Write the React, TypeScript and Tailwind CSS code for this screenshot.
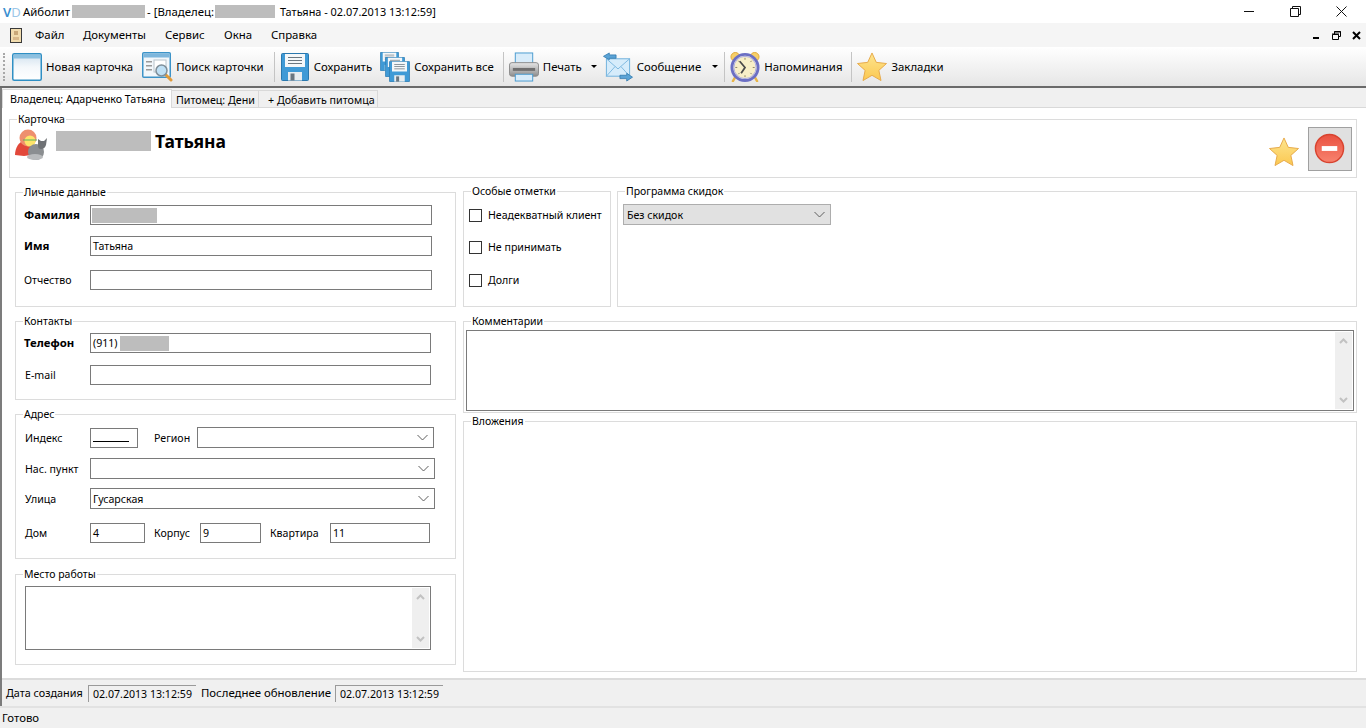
import type { ReactNode } from 'react';

const Redact = ({ className }: { className: string }) => <span className={`inline-block bg-[#bdbdbd] ${className}`} />;

const CardIcon = () => (
  <svg width="30" height="28" viewBox="0 0 30 28">
    <defs>
      <linearGradient id="cardBody" x1="0" y1="0" x2="0" y2="1">
        <stop offset="0" stopColor="#cfe0ee" />
        <stop offset="0.5" stopColor="#f4f8fb" />
        <stop offset="1" stopColor="#ffffff" />
      </linearGradient>
    </defs>
    <rect x="0.75" y="0.75" width="28.5" height="26.5" rx="1.5" fill="url(#cardBody)" stroke="#2f8fc4" strokeWidth="1.5" />
    <rect x="1.5" y="1.5" width="27" height="4" fill="#8cc0e0" />
  </svg>
);

const SearchIcon = () => (
  <svg width="31" height="30" viewBox="0 0 31 30" className="-mr-px">
    <rect x="0.75" y="0.75" width="27.5" height="24.5" rx="1" fill="#f2f7fb" stroke="#3c93c8" strokeWidth="1.5" />
    <rect x="1.5" y="1.5" width="26" height="4" fill="#7db6dc" />
    <rect x="4" y="9" width="6" height="1.5" fill="#9a9a9a" />
    <rect x="4" y="13" width="6" height="1.5" fill="#9a9a9a" />
    <rect x="4" y="17" width="6" height="1.5" fill="#9a9a9a" />
    <rect x="12" y="8" width="12" height="12" fill="#ffffff" stroke="#b8c4cc" />
    <path d="M24 23l5 5" stroke="#e09a3a" strokeWidth="3" strokeLinecap="round" />
    <circle cx="19.5" cy="18.5" r="5.5" fill="#bfe0f5" stroke="#7f8f9a" strokeWidth="1.5" />
  </svg>
);

const Floppy = ({ size = 28 }: { size?: number }) => (
  <svg width={size} height={size} viewBox="0 0 28 28">
    <path d="M1.5 0.5h25a1 1 0 011 1v25a1 1 0 01-1 1h-25a1 1 0 01-1-1v-25a1 1 0 011-1z" fill="#3f9ad6" stroke="#2a78ae" />
    <rect x="4" y="1" width="20" height="13" fill="#f4f7f9" />
    <rect x="7" y="4" width="14" height="1" fill="#6b7780" />
    <rect x="7" y="7" width="14" height="1" fill="#6b7780" />
    <rect x="7" y="10" width="14" height="1" fill="#6b7780" />
    <rect x="7" y="19" width="14" height="8.5" fill="#e8edf0" />
    <rect x="9.5" y="20.5" width="4" height="7" fill="#6a7680" />
  </svg>
);

const SaveAllIcon = () => (
  <div className="relative h-[30px] w-[30px]">
    <div className="absolute left-0 top-0"><Floppy size={19} /></div>
    <div className="absolute left-[5px] top-[5px]"><Floppy size={20} /></div>
    <div className="absolute left-[9px] top-[9px]"><Floppy size={21} /></div>
  </div>
);

const PrinterIcon = () => (
  <svg width="30" height="30" viewBox="0 0 31 30">
    <defs>
      <linearGradient id="printerBody" x1="0" y1="0" x2="0" y2="1">
        <stop offset="0" stopColor="#e6e6e6" />
        <stop offset="1" stopColor="#8d8d8d" />
      </linearGradient>
    </defs>
    <rect x="6.5" y="0.5" width="18" height="13" fill="#d8ecfa" stroke="#4a9bd0" />
    <rect x="0.5" y="10.5" width="30" height="14" rx="2.5" fill="url(#printerBody)" stroke="#8a8a8a" />
    <rect x="4" y="16" width="23" height="3" fill="#6f6f6f" />
    <rect x="6.5" y="22.5" width="18" height="7" fill="#d8ecfa" stroke="#4a9bd0" />
  </svg>
);

const MessageIcon = () => (
  <svg width="30" height="30" viewBox="0 0 31 30">
    <rect x="3.5" y="6.5" width="24" height="18" fill="#d6ecfb" stroke="#6fb1dd" />
    <path d="M3.5 6.5L15.5 17l12-10.5M3.5 24.5l9-10M27.5 24.5l-9-10" fill="none" stroke="#7db8e0" />
    <path d="M0.5 4L6.5 0.5V2.5H13.5V6H6.5V7.5z" fill="#5aa3d6" stroke="#2f78ae" strokeWidth="0.8" />
    <path d="M30.5 25.5L24.5 29.5V27H17.5V23.5H24.5V21.5z" fill="#5aa3d6" stroke="#2f78ae" strokeWidth="0.8" />
  </svg>
);

const ClockIcon = () => (
  <svg width="30" height="30" viewBox="0 0 31 31">
    <circle cx="5.5" cy="5" r="4.5" fill="#f7cf68" stroke="#e0a838" />
    <circle cx="25.5" cy="5" r="4.5" fill="#f7cf68" stroke="#e0a838" />
    <path d="M6 25l-3 5M25 25l3 5" stroke="#e8b548" strokeWidth="2.5" strokeLinecap="round" />
    <circle cx="15.5" cy="16" r="13.5" fill="#f8efc8" stroke="#6b6fc4" strokeWidth="3" />
    <circle cx="15.5" cy="16" r="11.5" fill="none" stroke="#a9abe6" />
    <path d="M15.5 6v2M15.5 24v2M5.5 16h2M23.5 16h2M8.5 9l1.4 1.4M22.5 23l-1.4-1.4M22.5 9l-1.4 1.4M8.5 23l1.4-1.4" stroke="#8a8468" strokeWidth="1" />
    <path d="M10 9.5L15.5 16L11.5 22" fill="none" stroke="#4a4a4a" strokeWidth="1.8" />
  </svg>
);

const Star = ({ size = 30 }: { size?: number }) => (
  <svg width={size} height={size} viewBox="0 0 31 31">
    <defs>
      <linearGradient id="starFill" x1="0" y1="0" x2="0" y2="1">
        <stop offset="0" stopColor="#fde58f" />
        <stop offset="1" stopColor="#fbc851" />
      </linearGradient>
    </defs>
    <path
      d="M15.5 1l4.4 9.7 10.6 1.2-7.9 7.1 2.2 10.5-9.3-5.4-9.3 5.4 2.2-10.5L0.5 11.9l10.6-1.2z"
      fill="url(#starFill)"
      stroke="#e6a94a"
      strokeWidth="1"
      strokeLinejoin="round"
    />
  </svg>
);

const OwnerIcon = () => (
  <svg width="33" height="33" viewBox="0 0 33 33">
    <path d="M0 27c0-7 4-13 8-14h8c2 2 2 10 0 14l-7 1z" fill="#e2483a" />
    <circle cx="13" cy="10" r="8.5" fill="#ee8f6e" />
    <circle cx="15" cy="13" r="5.5" fill="#fde46a" />
    <path d="M8 12h14" stroke="#5eb35a" strokeWidth="1" />
    <ellipse cx="21" cy="24" rx="8" ry="8" fill="#8b8e91" />
    <ellipse cx="20" cy="29" rx="8" ry="3" fill="#b9bbbd" />
    <path d="M23 17v-6l3 2h3l3-3-1 7c-1 3-3 4-5 4-2 0-3-1-3-4z" fill="#6f7275" />
  </svg>
);

const StopIcon = () => (
  <svg width="31" height="31" viewBox="0 0 32 32">
    <defs>
      <linearGradient id="stopFill" x1="0" y1="0" x2="0" y2="1">
        <stop offset="0" stopColor="#e9503f" />
        <stop offset="1" stopColor="#f8836f" />
      </linearGradient>
    </defs>
    <circle cx="16" cy="16" r="14.5" fill="url(#stopFill)" stroke="#d8432f" strokeWidth="1.5" />
    <rect x="8" y="13.5" width="16" height="5" fill="#ffffff" />
  </svg>
);

const ChevronDown = () => (
  <svg width="11" height="7" viewBox="0 0 11 7" className="shrink-0">
    <path d="M0.5 1l5 5 5-5" fill="none" stroke="#5f5f5f" />
  </svg>
);

const Separator = ({ className }: { className: string }) => <div className={`h-[30px] w-px bg-[#c4c4c4] ${className}`} />;

const ToolItem = ({ icon, label, className }: { icon: ReactNode; label: string; className: string }) => (
  <div className={`flex shrink-0 items-center ${className}`}>
    {icon}
    <span className="ml-[4px] whitespace-nowrap">{label}</span>
  </div>
);

const Caret = ({ className }: { className: string }) => (
  <div className={`h-0 w-0 shrink-0 border-x-[3px] border-t-[3px] border-x-transparent border-t-black ${className}`} />
);

const Group = ({ title, className, children }: { title: string; className: string; children?: ReactNode }) => (
  <fieldset className={`min-w-0 border border-[#dcdcdc] text-[10.6px] ${className}`}>
    <legend className="ml-[7px] px-px text-[10.5px] leading-[13px] whitespace-nowrap">{title}</legend>
    {children}
  </fieldset>
);

const TextBox = ({ className, children }: { className: string; children?: ReactNode }) => (
  <div className={`flex h-[20px] shrink-0 items-center border border-[#7a7a7a] bg-white px-[2px] ${className}`}>{children}</div>
);

const ComboBox = ({ className, value }: { className: string; value?: string }) => (
  <div className={`flex h-[21px] shrink-0 items-center justify-between border border-[#7a7a7a] bg-white pl-[2px] pr-[5px] ${className}`}>
    <span>{value}</span>
    <ChevronDown />
  </div>
);

const Check = ({ label, className }: { label: string; className: string }) => (
  <div className={`flex items-center ${className}`}>
    <div className="h-[13px] w-[13px] shrink-0 border border-[#333333] bg-white" />
    <span className="ml-[6px] whitespace-nowrap">{label}</span>
  </div>
);

const ScrollBar = () => (
  <div className="flex w-[17px] shrink-0 flex-col items-center justify-between bg-[#efefef] py-[6px]">
    <svg width="9" height="6" viewBox="0 0 9 6"><path d="M1 5l3.5-3.5L8 5" fill="none" stroke="#c2c2c2" strokeWidth="2" /></svg>
    <svg width="9" height="6" viewBox="0 0 9 6"><path d="M1 1l3.5 3.5L8 1" fill="none" stroke="#c2c2c2" strokeWidth="2" /></svg>
  </div>
);

const MENU = [
  { label: 'Файл', cls: 'ml-[13px] w-[48px]' },
  { label: 'Документы', cls: 'w-[82px]' },
  { label: 'Сервис', cls: 'w-[59px]' },
  { label: 'Окна', cls: 'w-[47px]' },
  { label: 'Справка', cls: 'w-[60px]' },
];

export default function App() {
  return (
    <div className="flex h-[728px] w-[1366px] flex-col overflow-hidden bg-white text-[11.4px] leading-[14px] text-black [font-family:'Noto_Sans','Liberation_Sans',sans-serif]">
      {/* title bar */}
      <div className="flex h-[23px] shrink-0 items-center">
        <span className="ml-[3px] w-[17px] text-[13px] font-semibold"><span className="text-[#3b8fd0]">V</span><span className="font-normal text-[#9cc7e8]">D</span></span>
        <span className="ml-[3px] w-[49px]">Айболит</span>
        <Redact className="h-[13px] w-[73px]" />
        <span className="ml-[2px] w-[68px] whitespace-pre">- [Владелец:</span>
        <Redact className="h-[13px] w-[60px]" />
        <span className="ml-[5px] text-[10.9px] whitespace-pre">Татьяна - 02.07.2013 13:12:59]</span>
        <div className="ml-auto flex items-center">
          <svg width="11" height="11" viewBox="0 0 11 11" className="mr-[35px]"><path d="M0 5.5h10" stroke="#111" /></svg>
          <svg width="11" height="11" viewBox="0 0 11 11" className="mr-[35px]"><path d="M0.5 2.5h8v8h-8zM2.5 2.5v-2h8v8h-2" fill="none" stroke="#111" /></svg>
          <svg width="11" height="11" viewBox="0 0 11 11" className="mr-[19px]"><path d="M0.5 0.5l10 10M10.5 0.5l-10 10" stroke="#111" /></svg>
        </div>
      </div>

      {/* menu */}
      <div className="flex h-[24px] shrink-0 items-center bg-[#f5f5f5]">
        <svg width="12" height="15" viewBox="0 0 12 15" className="ml-[10px]">
          <rect x="0.5" y="0.5" width="11" height="14" fill="#f1dcae" stroke="#3a3a3a" />
          <rect x="4" y="3" width="4" height="4" fill="#c9a878" />
          <rect x="3" y="9" width="6" height="3" fill="#d9b98a" />
        </svg>
        {MENU.map((m) => (
          <span key={m.label} className={`whitespace-nowrap ${m.cls}`}>{m.label}</span>
        ))}
        <div className="ml-auto flex items-center">
          <div className="mr-[13px] mt-[5px] h-[2px] w-[6px] bg-black" />
          <svg width="9" height="9" viewBox="0 0 9 9" className="mr-[11px]"><path d="M0.5 3.5h6v5h-6zM2.5 3V0.5h6v5H7" fill="none" stroke="#000" strokeWidth="1" /><path d="M0 3h7M2 1h7" stroke="#000" /></svg>
          <svg width="9" height="9" viewBox="0 0 9 9" className="mr-[5px]"><path d="M1 1l7 7M8 1l-7 7" stroke="#000" strokeWidth="2" /></svg>
        </div>
      </div>

      {/* toolbar */}
      <div className="flex h-[41px] shrink-0 items-center border-b-2 border-[#6a6a6a] bg-gradient-to-b from-white to-[#e6e6e6]">
        <div className="ml-[3px] h-[28px] w-[2px] border-l-2 border-dotted border-[#a8a8a8]" />
        <ToolItem className="ml-[7px]" icon={<CardIcon />} label="Новая карточка" />
        <ToolItem className="ml-[9px]" icon={<SearchIcon />} label="Поиск карточки" />
        <Separator className="ml-[10px]" />
        <ToolItem className="ml-[6px]" icon={<div className="w-[29px]"><Floppy /></div>} label="Сохранить" />
        <ToolItem className="ml-[8px]" icon={<SaveAllIcon />} label="Сохранить все" />
        <Separator className="ml-[9px]" />
        <ToolItem className="ml-[5px]" icon={<PrinterIcon />} label="Печать" />
        <Caret className="ml-[9px]" />
        <ToolItem className="ml-[6px]" icon={<MessageIcon />} label="Сообщение" />
        <Caret className="ml-[11px]" />
        <Separator className="ml-[6px]" />
        <ToolItem className="ml-[5px]" icon={<ClockIcon />} label="Напоминания" />
        <Separator className="ml-[9px]" />
        <ToolItem className="ml-[5px]" icon={<Star />} label="Закладки" />
      </div>

      {/* body */}
      <div className="flex min-h-0 flex-1 flex-col border-l-2 border-[#7c7c7c]">
        {/* tabs */}
        <div className="flex h-[20px] shrink-0 items-end border-b border-[#d9d9d9] bg-[#f0f0f0] text-[10.7px] whitespace-nowrap">
          <div className="-mb-px flex h-[19px] w-[170px] items-center border-x border-t border-[#d9d9d9] bg-white pl-[7px]">Владелец: Адарченко Татьяна</div>
          <div className="flex h-[17px] w-[87px] items-center border-r border-t border-[#d9d9d9] pl-[4px] pt-px">Питомец: Дени</div>
          <div className="flex h-[17px] w-[119px] items-center border-r border-t border-[#d9d9d9] pl-[9px] pt-px">+ Добавить питомца</div>
        </div>

        <div className="min-h-0 flex-1 pl-[7px] pt-[5px]">
          <Group title="Карточка" className="h-[65px] w-[1348px]">
            <div className="flex items-start">
              <div className="ml-[5px] mt-[2px]"><OwnerIcon /></div>
              <Redact className="ml-[8px] mt-[5px] h-[20px] w-[95px]" />
              <span className="ml-[4px] mt-[5px] text-[17.5px] leading-[20px] font-bold">Татьяна</span>
              <div className="ml-auto mr-[4px] flex items-center">
                <div className="mr-[9px] mt-[7px]"><Star /></div>
                <div className="mt-px flex h-[44px] w-[44px] items-center justify-center border border-[#a0a0a0] bg-[#e0e0e0] pb-px pr-px"><StopIcon /></div>
              </div>
            </div>
          </Group>

          <div className="mt-[8px] flex">
            {/* left column */}
            <div className="ml-[6px] flex w-[441px] shrink-0 flex-col">
              <Group title="Личные данные" className="h-[121px]">
                <div className="flex items-center pl-[8px] pt-[6px]">
                  <span className="w-[66px] text-[11.4px] font-bold">Фамилия</span>
                  <TextBox className="w-[342px]"><Redact className="-ml-px h-[15px] w-[65px]" /></TextBox>
                </div>
                <div className="mt-[11px] flex items-center pl-[8px]">
                  <span className="w-[66px] text-[11.4px] font-bold">Имя</span>
                  <TextBox className="w-[342px]">Татьяна</TextBox>
                </div>
                <div className="mt-[14px] flex items-center pl-[8px]">
                  <span className="w-[66px]">Отчество</span>
                  <TextBox className="w-[342px]" />
                </div>
              </Group>

              <Group title="Контакты" className="mt-[8px] h-[85px]">
                <div className="flex items-center pl-[8px] pt-[5px]">
                  <span className="w-[66px] text-[11.4px] font-bold">Телефон</span>
                  <TextBox className="w-[341px]">(911)<Redact className="ml-[2px] h-[15px] w-[49px]" /></TextBox>
                </div>
                <div className="mt-[12px] flex items-center pl-[9px]">
                  <span className="w-[65px]">E-mail</span>
                  <TextBox className="w-[341px]" />
                </div>
              </Group>

              <Group title="Адрес" className="mt-[8px] h-[151px]">
                <div className="flex items-center pl-[9px] pt-[6px]">
                  <span className="w-[65px]">Индекс</span>
                  <TextBox className="w-[48px]"><span className="mt-[8px] h-px w-[36px] bg-black" /></TextBox>
                  <span className="ml-[16px] w-[43px]">Регион</span>
                  <ComboBox className="w-[237px]" />
                </div>
                <div className="mt-[10px] flex items-center pl-[9px]">
                  <span className="w-[65px]">Нас. пункт</span>
                  <ComboBox className="w-[345px]" />
                </div>
                <div className="mt-[9px] flex items-center pl-[9px]">
                  <span className="w-[65px]">Улица</span>
                  <ComboBox className="w-[345px]" value="Гусарская" />
                </div>
                <div className="mt-[14px] flex items-center pl-[9px]">
                  <span className="w-[65px]">Дом</span>
                  <TextBox className="w-[55px]">4</TextBox>
                  <span className="ml-[9px] w-[46px]">Корпус</span>
                  <TextBox className="w-[61px]">9</TextBox>
                  <span className="ml-[9px] w-[60px]">Квартира</span>
                  <TextBox className="w-[100px]">11</TextBox>
                </div>
              </Group>

              <Group title="Место работы" className="mt-[9px] h-[97px]">
                <div className="ml-[9px] mt-[5px] flex h-[64px] w-[406px] justify-end border border-[#7a7a7a] p-px">
                  <ScrollBar />
                </div>
              </Group>
            </div>

            {/* right column */}
            <div className="ml-[7px] flex w-[894px] shrink-0 flex-col">
              <div className="-mt-px flex gap-[6px]">
                <Group title="Особые отметки" className="h-[122px] w-[148px]">
                  <div className="pl-[5px] pt-[9px]">
                    <Check label="Неадекватный клиент" className="h-[16px]" />
                    <Check label="Не принимать" className="mt-[16px] h-[16px]" />
                    <Check label="Долги" className="mt-[17px] h-[16px]" />
                  </div>
                </Group>
                <Group title="Программа скидок" className="h-[122px] flex-1">
                  <div className="ml-[5px] mt-[6px] flex h-[21px] w-[208px] items-center justify-between border border-[#adadad] bg-[#e1e1e1] pl-[3px] pr-[5px]">
                    <span>Без скидок</span>
                    <ChevronDown />
                  </div>
                </Group>
              </div>
              <Group title="Комментарии" className="mt-[8px] h-[98px]">
                <div className="ml-[2px] mt-[2px] flex h-[81px] w-[888px] justify-end border border-[#7a7a7a] p-px">
                  <ScrollBar />
                </div>
              </Group>
              <Group title="Вложения" className="mt-[2px] h-[257px]" />
            </div>
          </div>
        </div>

        {/* dates row */}
        <div className="flex h-[28px] shrink-0 items-center border-t-2 border-[#dcdcdc] bg-[#f0f0f0] pl-[4px] whitespace-nowrap">
          <span className="w-[82px] text-[10.8px]">Дата создания</span>
          <span className="flex h-[17px] w-[108px] items-center border-l border-t border-[#9a9a9a] bg-[#f0f0f0] pl-[4px] text-[10.6px]">02.07.2013 13:12:59</span>
          <span className="ml-[5px] w-[134px]">Последнее обновление</span>
          <span className="flex h-[17px] w-[108px] items-center border-l border-t border-[#9a9a9a] bg-[#f0f0f0] pl-[4px] text-[10.6px]">02.07.2013 13:12:59</span>
        </div>
      </div>

      {/* status bar */}
      <div className="flex h-[22px] shrink-0 items-center border-t-2 border-[#e2e2e2] bg-[#f0f0f0] pl-[2px]">Готово</div>
    </div>
  );
}
